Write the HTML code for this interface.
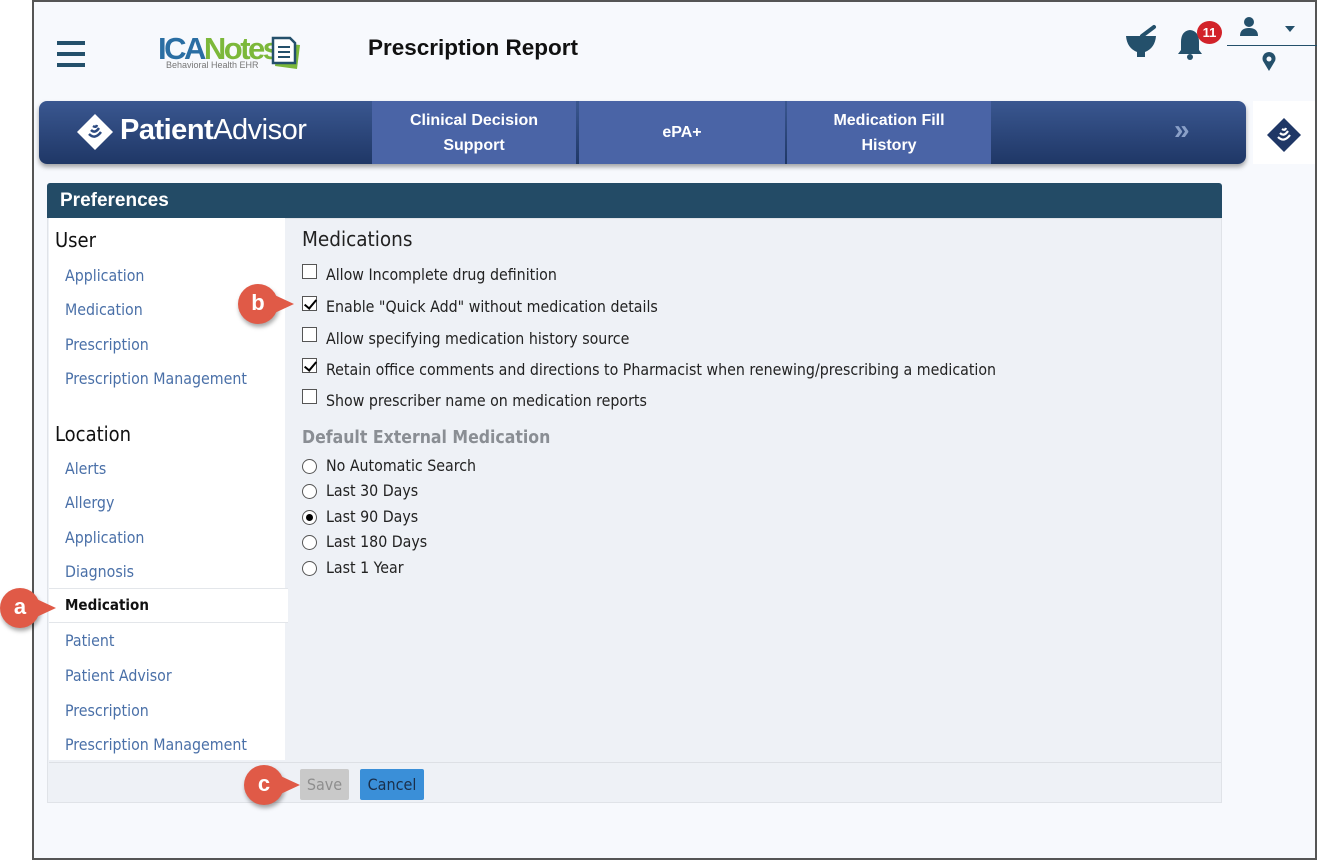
<!DOCTYPE html>
<html><head><meta charset="utf-8"><style>
*{margin:0;padding:0;box-sizing:border-box}
body{width:1318px;height:820px;background:#fff;position:relative;overflow:hidden;font-family:"DejaVu Sans Condensed","DejaVu Sans",sans-serif}
.a{position:absolute;white-space:nowrap}
#frame{position:absolute;left:32px;top:0;width:1285px;height:860px;border:2px solid #555;background:#f7f9fd}
.lk{position:absolute;left:65px;font-size:15.8px;line-height:19px;color:#4a70a8;white-space:nowrap}
.cb{position:absolute;left:302px;width:15px;height:15px;border:1px solid #555;background:#fff}
.ck::after{content:"";position:absolute;left:4px;top:0px;width:5px;height:10px;border:solid #000;border-width:0 2.5px 2.5px 0;transform:rotate(40deg)}
.ct{position:absolute;left:326px;font-size:15.8px;line-height:19px;color:#222;white-space:nowrap}
.rd{position:absolute;left:302px;width:15px;height:15px;border:1px solid #555;border-radius:50%;background:#fff}
.rd.on::after{content:"";position:absolute;left:3px;top:3px;width:7px;height:7px;border-radius:50%;background:#000}
.call{position:absolute;width:40px;height:40px;border-radius:50%;background:#e05a47;color:#fff;font:bold 22px "Liberation Sans",sans-serif;text-align:center;line-height:38px;box-shadow:1px 3px 4px rgba(0,0,0,.35)}
.call::after{content:"";position:absolute;left:30px;top:8px;border-left:26px solid #e05a47;border-top:12px solid transparent;border-bottom:12px solid transparent}
.tab{position:absolute;top:101px;height:63px;background:#4a64a6;color:#fff;font:bold 16px "Liberation Sans",sans-serif;text-align:center;display:flex;align-items:center;justify-content:center;line-height:25px}
</style></head><body>
<div id="frame"></div>
<!-- header -->
<div class="a" style="left:57px;top:41px;width:28px;height:4px;background:#24506b"></div>
<div class="a" style="left:57px;top:52px;width:28px;height:4px;background:#24506b"></div>
<div class="a" style="left:57px;top:63px;width:28px;height:4px;background:#24506b"></div>
<div class="a" style="left:158px;top:31px;font:bold 31px 'Liberation Sans',sans-serif;letter-spacing:-2.5px;color:#2a6ea3">ICA<span style="color:#7cb83a">Notes</span></div>
<svg class="a" style="left:270px;top:35px" width="34" height="36" viewBox="0 0 34 36"><path d="M8 8 L30 10 L27 34 L5 31Z" fill="#7cb83a"/><path d="M3 3 H20 L25 8 V28 H3Z" fill="#fff" stroke="#24506b" stroke-width="2.5"/><path d="M8 12h12M8 17h12M8 22h12" stroke="#24506b" stroke-width="2"/></svg>
<div class="a" style="left:166px;top:60px;font:9px 'Liberation Sans',sans-serif;color:#777">Behavioral Health EHR</div>
<div class="a" style="left:368px;top:35px;font:bold 22.5px 'Liberation Sans',sans-serif;color:#111">Prescription Report</div>
<svg class="a" style="left:1124px;top:24px" width="34" height="36" viewBox="0 0 34 36"><path d="M2 12 H32 Q31 24 21 28 V33 H13 V28 Q3 24 2 12Z" fill="#24506b"/><path d="M18 12 L30 3" stroke="#24506b" stroke-width="4" stroke-linecap="round"/></svg>
<svg class="a" style="left:1176px;top:26px" width="30" height="36" viewBox="0 0 30 36"><path d="M14 4 Q5 5 5 16 V24 L2 28 H26 L23 24 V16 Q23 5 14 4Z" fill="#24506b"/><circle cx="14" cy="31" r="3" fill="#24506b"/></svg>
<div class="a" style="left:1197px;top:21px;width:25px;height:23px;border-radius:50%;background:#d2232a;color:#fff;font:bold 13px 'Liberation Sans',sans-serif;text-align:center;line-height:23px">11</div>
<svg class="a" style="left:1238px;top:16px" width="22" height="22" viewBox="0 0 22 22"><circle cx="11" cy="6" r="5" fill="#24506b"/><path d="M2 20 Q2 12 11 12 Q20 12 20 20Z" fill="#24506b"/></svg>
<div class="a" style="left:1285px;top:26px;border-left:5px solid transparent;border-right:5px solid transparent;border-top:6px solid #24506b"></div>
<div class="a" style="left:1227px;top:45px;width:90px;height:1px;background:#24506b"></div>
<svg class="a" style="left:1261px;top:52px" width="16" height="20" viewBox="0 0 16 20"><path d="M8 19 L2 9 A6.5 6.5 0 1 1 14 9Z" fill="#24506b"/><circle cx="8" cy="7" r="2.5" fill="#f7f9fd"/></svg>
<!-- nav -->
<div class="a" style="left:39px;top:101px;width:1207px;height:63px;border-radius:8px;background:linear-gradient(#3a5790,#1f3766);box-shadow:0 3px 5px rgba(0,0,0,.35)"></div>
<svg class="a" style="left:75px;top:112px" width="40" height="40" viewBox="0 0 40 40"><path d="M20 2 L38 20 L20 38 L2 20Z" fill="#fff"/><path d="M14 22 Q20 28 26 20 M16 18 Q20 22 24 16 M18 14 Q21 16 22 13" stroke="#2c4a80" stroke-width="2.5" fill="none"/></svg>
<div class="a" style="left:120px;top:114px;font:bold 29px 'Liberation Sans',sans-serif;color:#fff;letter-spacing:-.5px">Patient<span style="font-weight:normal">Advisor</span></div>
<div class="tab" style="left:372px;width:204px">Clinical Decision<br>Support</div>
<div class="tab" style="left:579px;width:206px">ePA+</div>
<div class="tab" style="left:787px;width:204px">Medication Fill<br>History</div>
<div class="a" style="left:1174px;top:114px;font:bold 28px 'Liberation Sans',sans-serif;color:#8aa0c8">»</div>
<div class="a" style="left:1253px;top:101px;width:62px;height:63px;background:#fff"></div>
<svg class="a" style="left:1266px;top:117px" width="36" height="36" viewBox="0 0 36 36"><path d="M18 1 L35 18 L18 35 L1 18Z" fill="#1f3766"/><path d="M12 20 Q18 26 24 18 M14 16 Q18 20 22 14 M16 12 Q19 14 20 11" stroke="#fff" stroke-width="2.2" fill="none"/></svg>
<!-- prefs -->
<div class="a" style="left:47px;top:183px;width:1175px;height:35px;background:#234b66;border-radius:3px 3px 0 0"></div>
<div class="a" style="left:60px;top:190px;font:bold 19px 'Liberation Sans',sans-serif;color:#fff">Preferences</div>
<div class="a" style="left:47px;top:218px;width:1175px;height:585px;background:#eef1f6;border:1px solid #e0e3e8"></div>
<div class="a" style="left:49px;top:218px;width:236px;height:542px;background:#fff"></div>
<div class="a" style="left:49px;top:762px;width:1172px;height:1px;background:#dde0e5"></div>
<div class="a" style="left:55px;top:228px;font-size:20px;color:#111">User</div>
<div class="lk" style="top:266px">Application</div>
<div class="lk" style="top:300px">Medication</div>
<div class="lk" style="top:335px">Prescription</div>
<div class="lk" style="top:369px">Prescription Management</div>
<div class="a" style="left:55px;top:422px;font-size:20px;color:#111">Location</div>
<div class="lk" style="top:459px">Alerts</div>
<div class="lk" style="top:493px">Allergy</div>
<div class="lk" style="top:528px">Application</div>
<div class="lk" style="top:562px">Diagnosis</div>
<div class="a" style="left:49px;top:588px;width:239px;height:35px;background:#fff;border-top:1px solid #e3e6ea;border-bottom:1px solid #e3e6ea"></div>
<div class="lk" style="top:596px;color:#111;font-weight:bold;font-size:15px">Medication</div>
<div class="lk" style="top:631px">Patient</div>
<div class="lk" style="top:666px">Patient Advisor</div>
<div class="lk" style="top:701px">Prescription</div>
<div class="lk" style="top:735px">Prescription Management</div>
<!-- content -->
<div class="a" style="left:302px;top:227px;font-size:20.5px;color:#222">Medications</div>
<div class="cb" style="top:264px"></div><div class="ct" style="top:265px">Allow Incomplete drug definition</div>
<div class="cb ck" style="top:296px"></div><div class="ct" style="top:297px">Enable "Quick Add" without medication details</div>
<div class="cb" style="top:327px"></div><div class="ct" style="top:329px">Allow specifying medication history source</div>
<div class="cb ck" style="top:358px"></div><div class="ct" style="top:360px">Retain office comments and directions to Pharmacist when renewing/prescribing a medication</div>
<div class="cb" style="top:389px"></div><div class="ct" style="top:391px">Show prescriber name on medication reports</div>
<div class="a" style="left:302px;top:428px;font-weight:bold;font-size:17.5px;color:#8a8e94">Default External Medication</div>
<div class="rd" style="top:459px"></div><div class="ct" style="top:456px">No Automatic Search</div>
<div class="rd" style="top:484px"></div><div class="ct" style="top:481px">Last 30 Days</div>
<div class="rd on" style="top:510px"></div><div class="ct" style="top:507px">Last 90 Days</div>
<div class="rd" style="top:535px"></div><div class="ct" style="top:532px">Last 180 Days</div>
<div class="rd" style="top:561px"></div><div class="ct" style="top:558px">Last 1 Year</div>
<!-- buttons -->
<div class="a" style="left:300px;top:769px;width:49px;height:31px;background:#c9c9c9;border-radius:2px;color:#8e8e8e;font-size:16px;text-align:center;line-height:31px">Save</div>
<div class="a" style="left:360px;top:769px;width:64px;height:31px;background:#3a8fd8;border-radius:2px;color:#1a2f4a;font-size:16px;text-align:center;line-height:31px">Cancel</div>
<!-- callouts -->
<div class="call" style="left:0;top:588px">a</div>
<div class="call" style="left:238px;top:284px">b</div>
<div class="call" style="left:244px;top:765px">c</div>
</body></html>
